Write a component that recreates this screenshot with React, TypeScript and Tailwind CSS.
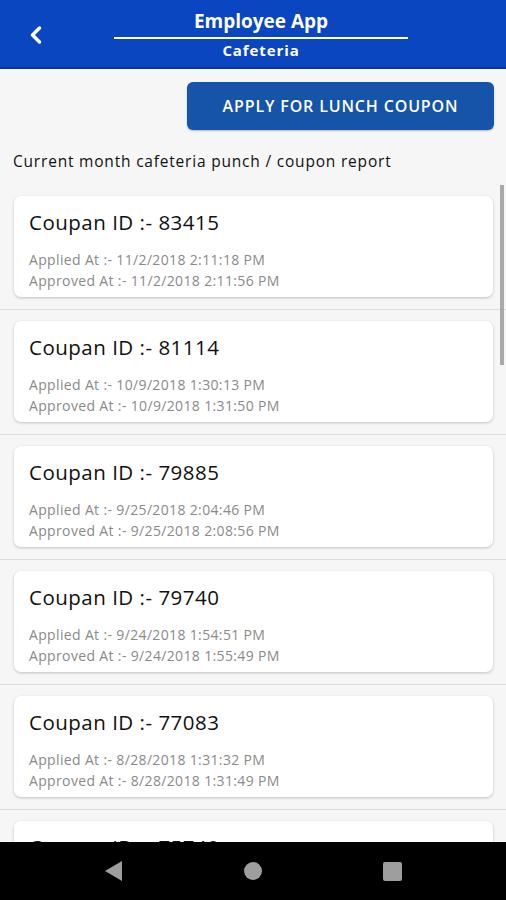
import { ChevronLeft } from "lucide-react";

const coupons = [
  { id: "83415", applied: "11/2/2018 2:11:18 PM", approved: "11/2/2018 2:11:56 PM" },
  { id: "81114", applied: "10/9/2018 1:30:13 PM", approved: "10/9/2018 1:31:50 PM" },
  { id: "79885", applied: "9/25/2018 2:04:46 PM", approved: "9/25/2018 2:08:56 PM" },
  { id: "79740", applied: "9/24/2018 1:54:51 PM", approved: "9/24/2018 1:55:49 PM" },
  { id: "77083", applied: "8/28/2018 1:31:32 PM", approved: "8/28/2018 1:31:49 PM" },
  { id: "75748", applied: "8/21/2018 1:30:12 PM", approved: "8/21/2018 1:31:02 PM" },
];

const CouponRow = ({ id, applied, approved }: (typeof coupons)[number]) => (
  <div className="border-b border-[#dcdcdc] pl-[14px] pr-[13px] pt-[11px] pb-[12px]">
    <div className="h-[101px] rounded-[7px] bg-white px-[15px] pt-[12px] shadow-[0_1px_3px_rgba(0,0,0,0.22)]">
      <div className="text-[20.5px] leading-[28px] tracking-[0.5px] text-[#111]">Coupan ID :- {id}</div>
      <div className="mt-[13px] text-[14px] leading-[21px] tracking-[0.35px] text-[#8a8a8a]">
        <div>Applied At :- {applied}</div>
        <div>Approved At :- {approved}</div>
      </div>
    </div>
  </div>
);

export default function App() {
  return (
    <div
      className="relative flex h-[900px] w-[506px] flex-col overflow-hidden bg-[#f6f6f6]"
      style={{ fontFamily: "'Open Sans', 'Noto Sans', sans-serif" }}
    >
      {/* header */}
      <header className="relative flex h-[69px] shrink-0 items-center justify-center border-b-2 border-[#0634a2] bg-[#0a46c0] pl-[16px]">
        <ChevronLeft className="absolute left-[22px] top-[21px] text-white" size={28} strokeWidth={3} />
        <div className="flex flex-col items-center text-white">
          <div className="text-[19px] font-bold leading-[26px]">Employee App</div>
          <div className="mt-[3px] h-[2px] w-[294px] bg-white" />
          <div className="mt-[1px] text-[15px] font-bold leading-[20px] tracking-[0.9px]">Cafeteria</div>
        </div>
      </header>

      <div className="flex justify-end px-[12px] pt-[13px]">
        <button className="h-[48px] w-[307px] rounded-[6px] bg-[#1554a8] text-[16px] font-semibold tracking-[0.85px] text-white shadow-[0_1px_2px_rgba(0,0,0,0.25)]">
          APPLY FOR LUNCH COUPON
        </button>
      </div>

      <p className="mt-[20px] px-[13px] text-[15.5px] leading-[22px] tracking-[0.8px] text-[#111]">
        Current month cafeteria punch / coupon report
      </p>

      <div className="relative mt-[13px] flex-1 overflow-hidden">
        {coupons.map((c) => (
          <CouponRow key={c.id} {...c} />
        ))}
        <div className="absolute right-[2px] top-[0px] h-[180px] w-[4px] bg-[#a9a9a9]" />
      </div>

      {/* android nav bar */}
      <nav className="absolute bottom-0 left-0 flex h-[58px] w-full items-center bg-black">
        <svg className="absolute left-[103px] top-[18px]" width="20" height="22" viewBox="0 0 20 22">
          <path d="M19 1 L2 11 L19 21 Z" fill="#9e9e9e" />
        </svg>
        <div className="absolute left-[244px] top-[20px] h-[18px] w-[18px] rounded-full bg-[#9e9e9e]" />
        <div className="absolute left-[383px] top-[20px] h-[19px] w-[19px] rounded-[2px] bg-[#9e9e9e]" />
      </nav>
    </div>
  );
}
